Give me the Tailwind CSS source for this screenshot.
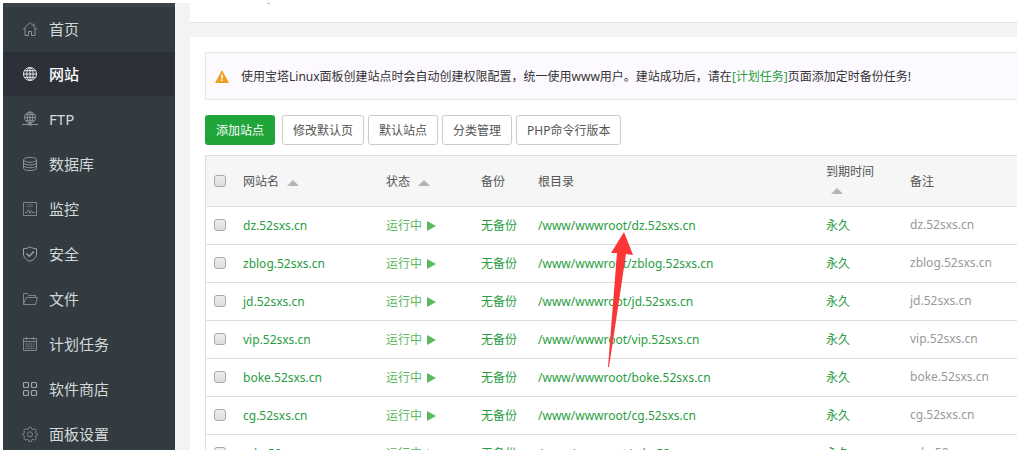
<!DOCTYPE html>
<html lang="zh-CN">
<head>
    <meta charset="UTF-8">
    <meta name="viewport" content="width=device-width, initial-scale=1.0">
    <title>网站管理</title>
    <script src="https://cdn.jsdelivr.net/npm/@tailwindcss/browser@4"></script>
</head>
<body class="bg-white font-['Noto_Sans','Noto_Sans_CJK_SC',sans-serif] text-[12px] leading-[18px] text-[#555]">
    <div class="h-screen overflow-hidden pl-[3px] pt-[3px] pb-[7px]">
        <div class="flex h-full overflow-hidden bg-[#f5f2f6]">

            <!-- Sidebar -->
            <nav class="w-[172px] shrink-0 overflow-hidden bg-[#313b40] text-[15px] text-[#d6d7d9]">
                <div class="h-1 bg-[#3a444a]"></div>
                <ul class="flex flex-col gap-px">
                    <li><a href="#" class="flex h-11 items-center gap-[11px] pl-[19px]">
                        <svg class="size-4 text-[#8c9397]" viewBox="0 0 16 16" fill="none" stroke="currentColor"><path d="M1 8.5 8 1.5l7 7M3 7v7.5h3.5v-4h3v4H13V7M12 5V2.5"/></svg>首页</a></li>
                    <li><a href="#" class="flex h-11 items-center gap-[11px] bg-[#2b3039] pl-[19px] font-medium text-white">
                        <svg class="size-4 text-[#e4e5e6]" viewBox="0 0 16 16" fill="none" stroke="currentColor"><circle cx="8" cy="8" r="6.5"/><ellipse cx="8" cy="8" rx="3.2" ry="6.5"/><path d="M8 1.5v13M1.5 8h13M2.5 4.7h11M2.5 11.3h11"/></svg>网站</a></li>
                    <li><a href="#" class="flex h-11 items-center gap-[11px] pl-[19px]">
                        <svg class="size-4 text-[#8c9397]" viewBox="0 0 16 16" fill="none" stroke="currentColor"><circle cx="8" cy="6.5" r="5.5"/><ellipse cx="8" cy="6.5" rx="2.7" ry="5.5"/><path d="M8 1v13M2.5 6.5h11M3.5 3.7h9M3.5 9.3h9M0 13.5h16"/><path d="M6 13.5h4" stroke-width="2"/></svg>FTP</a></li>
                    <li><a href="#" class="flex h-11 items-center gap-[11px] pl-[19px]">
                        <svg class="size-4 text-[#8c9397]" viewBox="0 0 16 16" fill="none" stroke="currentColor"><ellipse cx="8" cy="3.8" rx="6.5" ry="2.5"/><path d="M1.5 3.8v8.4c0 3.2 13 3.2 13 0V3.8M1.5 6.6c0 3.2 13 3.2 13 0M1.5 9.4c0 3.2 13 3.2 13 0"/></svg>数据库</a></li>
                    <li><a href="#" class="flex h-11 items-center gap-[11px] pl-[19px]">
                        <svg class="size-4 text-[#7d868a]" viewBox="0 0 16 16" fill="none" stroke="currentColor"><path d="M1.5 1.5h13v13h-13z"/><path d="M5 3.8h6M5 5.5h6" opacity=".6"/><path d="M3 11.500h2l1.500-3 1.500 4 1.500-3 1 2h2.500"/></svg>监控</a></li>
                    <li><a href="#" class="flex h-11 items-center gap-[11px] pl-[19px]">
                        <svg class="size-4 text-[#a0a6a9]" viewBox="0 0 16 16" fill="none" stroke="currentColor"><path d="M8 .8c2 1.4 4.3 1.9 6.5 1.9V8c0 3.5-3 5.8-6.5 7.3C4.5 13.800 1.500 11.500 1.500 8V2.700C3.700 2.700 6 2.200 8 .8z"/><path d="m4.500 7.500 2.800 2.800 4.500-4.800" stroke-width="1.400"/></svg>安全</a></li>
                    <li><a href="#" class="flex h-11 items-center gap-[11px] pl-[19px]">
                        <svg class="size-4 text-[#7d868a]" viewBox="0 0 16 16" fill="none" stroke="currentColor"><path d="M1.500 13.500v-11h4l1.500 2h6.500v2M1.500 13.500l2.500-7h11.500l-2 7z"/></svg>文件</a></li>
                    <li><a href="#" class="flex h-11 items-center gap-[11px] pl-[19px]">
                        <svg class="size-4 text-[#7d868a]" viewBox="0 0 16 16" fill="none" stroke="currentColor"><path d="M1.500 2.500h13v12h-13zM1.500 5.500h13M4.500 1v3M11.500 1v3"/><path d="M3.500 8h9M3.500 10.200h9M3.500 12.400h9" stroke-dasharray="1.800 .6"/></svg>计划任务</a></li>
                    <li><a href="#" class="flex h-11 items-center gap-[11px] pl-[19px]">
                        <svg class="size-4 text-[#a0a6a9]" viewBox="0 0 16 16" fill="none" stroke="currentColor" stroke-width="1.200"><rect x="1.500" y="1.500" width="5" height="5" rx="1"/><rect x="9.500" y="1.500" width="5" height="5" rx="1"/><rect x="1.500" y="9.500" width="5" height="5" rx="1"/><rect x="9.500" y="9.500" width="5" height="5" rx="1"/></svg>软件商店</a></li>
                    <li><a href="#" class="flex h-11 items-center gap-[11px] pl-[19px]">
                        <svg class="size-4 text-[#7d868a]" viewBox="0 0 16 16" fill="none" stroke="currentColor"><path d="m6.800 1.300h2.400l.5 1.800 1.300.5 1.700-.9 1.600 1.600-.9 1.700.5 1.300 1.800.5v1l-1.800.9-.5 1.200.9 1.700-1.600 1.600-1.700-.9-1.300.5-.5 1.700H6.800l-.5-1.700-1.300-.5-1.700.9-1.600-1.600.9-1.700-.5-1.200L.5 8.800v-1l1.600-.5.5-1.300-.9-1.700 1.600-1.600 1.700.9 1.300-.5z"/><circle cx="8" cy="8.300" r="2.500"/></svg>面板设置</a></li>
                </ul>
            </nav>

            <!-- Main Content -->
            <main class="flex min-w-0 flex-1 flex-col gap-[14px] pl-[15px]">
                <div class="h-5 shrink-0 border-b border-[#e2e0e5] bg-white pl-[77px]">
                    <div class="h-px w-[3px] bg-[#bbb]"></div>
                </div>

                <div class="flex-1 overflow-hidden bg-white pl-[15px] pt-[15px]">
                    <!-- Notice -->
                    <div class="flex h-12 items-center gap-3 rounded-l-xs border-y border-l border-[#e6e6ea] bg-[#fdfaff] pl-[9px] text-[#333]">
                        <svg class="h-[13px] w-[14px]" viewBox="0 0 14 13"><path d="M7 0 14 13H0z" fill="#f0a020"/><path d="M7 4.500v4M7 9.500v1.500" stroke="#fff" stroke-width="1.600"/></svg>
                        <p class="pt-0.5">使用宝塔Linux面板创建站点时会自动创建权限配置，统一使用www用户。建站成功后，请在<a href="#" class="text-[#2a9d42]">[计划任务]</a>页面添加定时备份任务!</p>
                    </div>

                    <!-- Actions -->
                    <div class="mt-[15px] mb-[10px] flex gap-1">
                        <button type="button" class="mr-[3px] h-[30px] rounded-[3px] bg-[#20a53a] px-[11px] pt-0.5 text-white">添加站点</button>
                        <button type="button" class="h-[30px] rounded-[3px] border border-[#ccc] px-[10px] pt-0.5">修改默认页</button>
                        <button type="button" class="h-[30px] rounded-[3px] border border-[#ccc] px-[10px] pt-0.5">默认站点</button>
                        <button type="button" class="h-[30px] rounded-[3px] border border-[#ccc] px-[10px] pt-0.5">分类管理</button>
                        <button type="button" class="h-[30px] rounded-[3px] border border-[#ccc] px-[10px] pt-0.5">PHP命令行版本</button>
                    </div>

                    <!-- Site table -->
                    <div class="relative border-l border-t border-[#ddd]">
                        <table class="w-full table-fixed text-left">
                            <colgroup>
                                <col class="w-[29px]">
                                <col class="w-[143px]">
                                <col class="w-[95px]">
                                <col class="w-[57px]">
                                <col class="w-72">
                                <col class="w-[84px]">
                                <col>
                            </colgroup>
                            <thead class="bg-[#f6f6f6]">
                                <tr class="h-[50px] border-b border-[#ddd]">
                                    <th class="pl-2"><input type="checkbox" aria-label="全选" class="block size-3 appearance-none rounded-[3px] border border-[#aaa] bg-linear-to-b from-[#eee] to-[#ddd]"></th>
                                    <th class="px-2 pt-0.5 font-normal">网站名 <span class="mx-[5px] inline-block border-x-6 border-b-6 border-x-transparent border-b-[#b5b5b5] align-middle"></span></th>
                                    <th class="px-2 pt-0.5 font-normal">状态 <span class="mx-[5px] inline-block border-x-6 border-b-6 border-x-transparent border-b-[#b5b5b5] align-middle"></span></th>
                                    <th class="px-2 pt-0.5 font-normal">备份</th>
                                    <th class="px-2 pt-0.5 font-normal">根目录</th>
                                    <th class="px-2 font-normal">到期时间 <span class="mx-[5px] inline-block border-x-6 border-b-6 border-x-transparent border-b-[#b5b5b5] align-middle"></span></th>
                                    <th class="px-2 pt-0.5 font-normal">备注</th>
                                </tr>
                            </thead>
                            <tbody id="siteList" class="text-[#2a9d42]"></tbody>
                        </table>

                        <!-- Pointer over the root directory column -->
                        <svg class="absolute left-[402px] top-[76px] h-[136px] w-[26px]" viewBox="0 0 26 136"><path d="M16 0 25 23 18 22 1 135H0L9 21 3 21z" fill="#fb3636"/></svg>
                    </div>
                </div>
            </main>
        </div>
    </div>

    <template id="siteRow">
        <tr class="h-[38px] border-b border-[#ddd]">
            <td class="pl-2"><input type="checkbox" class="block size-3 appearance-none rounded-[3px] border border-[#aaa] bg-linear-to-b from-[#eee] to-[#ddd]"></td>
            <td class="px-2 pt-0.5"><a href="#" class="site-name"></a></td>
            <td class="px-2 pt-0.5"><a href="#" class="flex items-center gap-[5px] text-[#5cb85c]">运行中<svg class="h-[10px] w-[9px]" viewBox="0 0 9 10"><path d="M0 0 9 5 0 10z" fill="#5cb85c"/></svg></a></td>
            <td class="px-2 pt-0.5"><a href="#">无备份</a></td>
            <td class="px-2 pt-0.5"><a href="#" class="site-path"></a></td>
            <td class="px-2 pt-0.5"><a href="#">永久</a></td>
            <td class="px-2 text-[#999]"><span class="site-note"></span></td>
        </tr>
    </template>

    <script>
        const sites = ['dz', 'zblog', 'jd', 'vip', 'boke', 'cg', 'edu'];
        const list = document.getElementById('siteList');
        const template = document.getElementById('siteRow');

        sites.forEach(name => {
            const domain = name + '.52sxs.cn';
            const row = template.content.cloneNode(true);
            row.querySelector('input').setAttribute('aria-label', domain);
            row.querySelector('.site-name').textContent = domain;
            row.querySelector('.site-path').textContent = '/www/wwwroot/' + domain;
            row.querySelector('.site-note').textContent = domain;
            list.appendChild(row);
        });
    </script>
</body>
</html>
